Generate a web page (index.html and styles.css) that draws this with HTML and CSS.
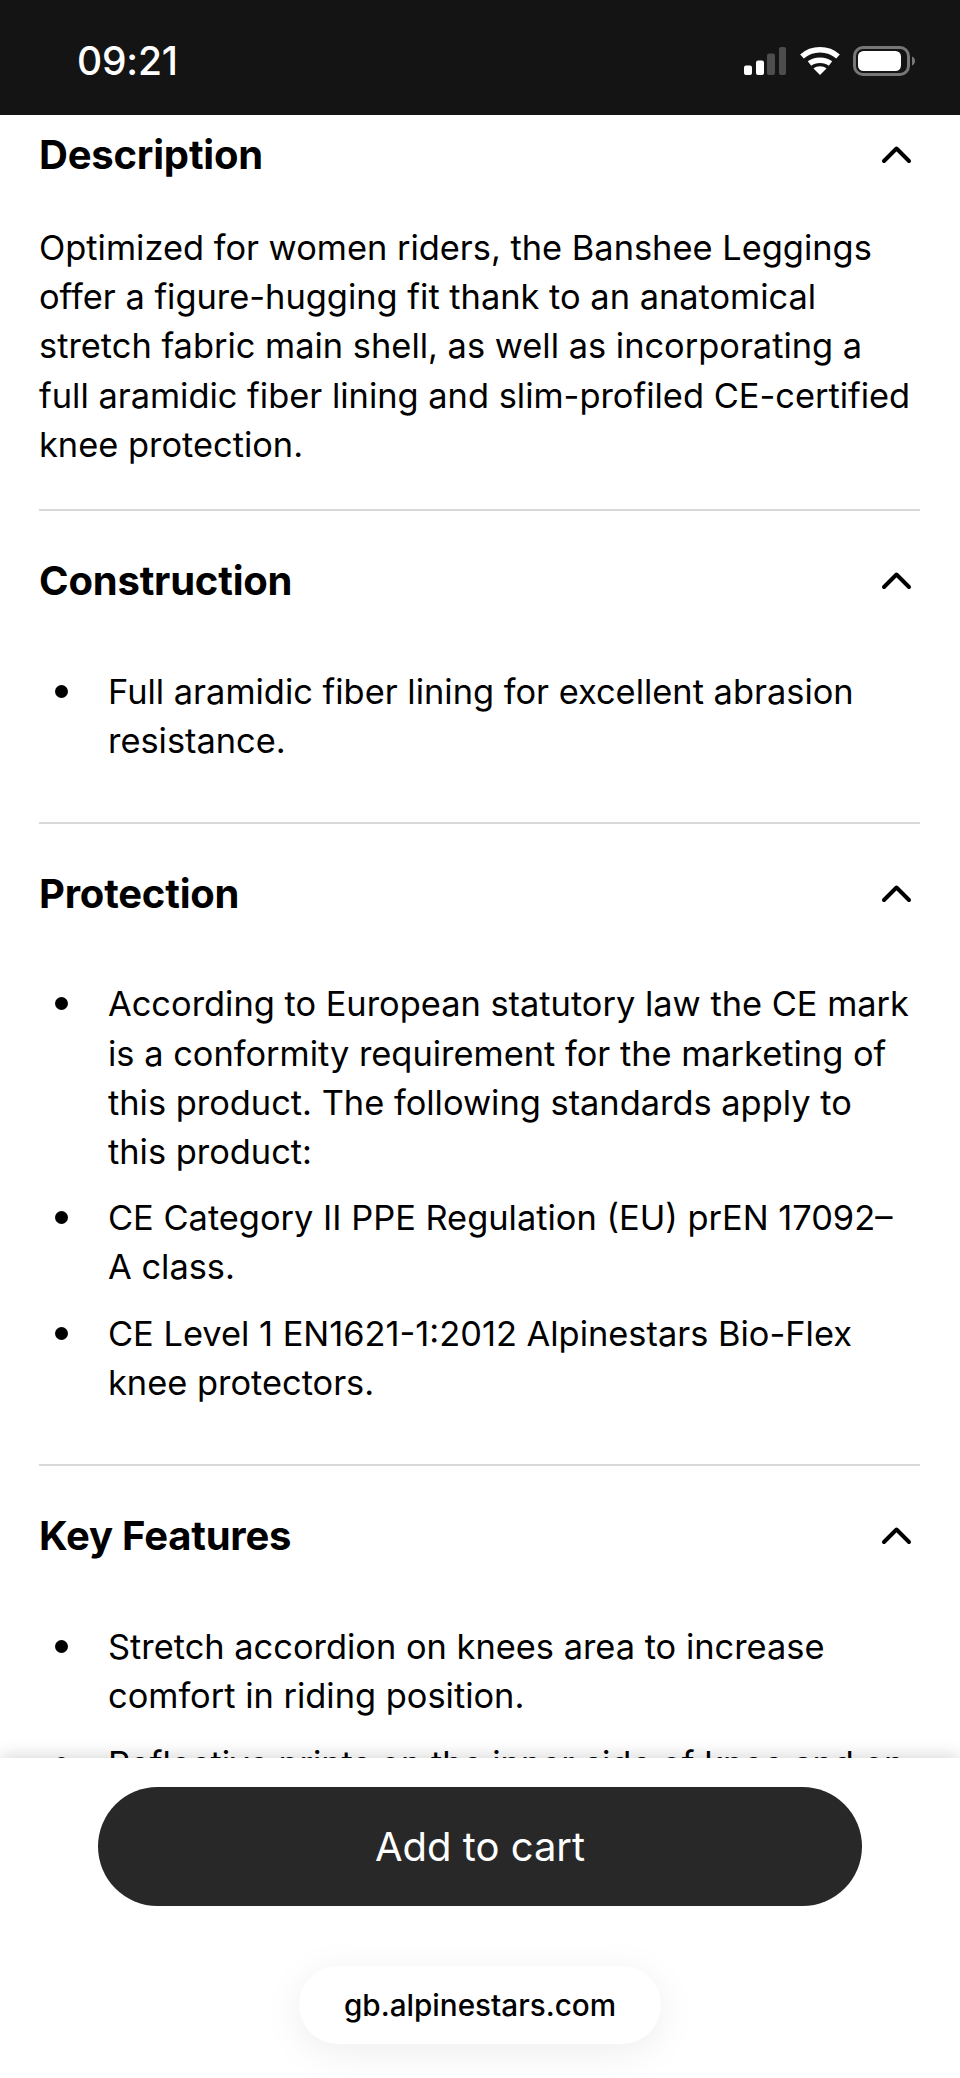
FILE: index.html
```html
<!DOCTYPE html>
<html lang="en">
<head>
<meta charset="utf-8">
<title>Banshee Leggings</title>
<link rel="stylesheet" href="styles.css">
</head>
<body>
<div class="screen">
  <header class="status">
    <span class="time">09:21</span>
    <div class="status-icons">
      <svg class="signal" width="42" height="30" viewBox="0 0 42 30"><rect x="0" y="19.500" width="8" height="9.500" rx="2" fill="#fff"/><rect x="12" y="14.500" width="8" height="14.500" rx="2" fill="#fff"/><rect x="23" y="7.500" width="8" height="21.500" rx="2" fill="#4d4d4d"/><rect x="35" y="1" width="7" height="28" rx="2" fill="#4d4d4d"/></svg>
      <svg class="wifi" width="40" height="30" viewBox="0 0 40 30"><path d="M2 10.5C12 1.5 28 1.5 38 10.5" fill="none" stroke="#fff" stroke-width="5.5"/><path d="M9.5 17.5C15 13 25 13 30.500 17.500" fill="none" stroke="#fff" stroke-width="5.500"/><path d="M13.500 22.500C17 19.500 23 19.500 26.500 22.500L20 29Z" fill="#fff"/></svg>
      <svg class="battery" width="62" height="30" viewBox="0 0 62 30"><rect x="1.500" y="1.500" width="54" height="27" rx="8.500" fill="none" stroke="#777" stroke-width="3"/><rect x="5" y="5" width="43" height="20" rx="5.500" fill="#fff"/><path d="M59 10.500c2 .5 3 2.500 3 4.500s-1 4-3 4.500z" fill="#777"/></svg>
    </div>
  </header>
  <main class="content">
    <section class="panel first">
      <div class="panel-head"><h2>Description</h2><svg class="chev" width="32" height="20" viewBox="0 0 32 20"><path d="M4 16L16.500 3.500L29 16" fill="none" stroke="#000" stroke-width="4" stroke-linecap="round" stroke-linejoin="round"/></svg></div>
      <p class="copy">Optimized for women riders, the Banshee Leggings<br>offer a figure-hugging fit thank to an anatomical<br>stretch fabric main shell, as well as incorporating a<br>full aramidic fiber lining and slim-profiled CE-certified<br>knee protection.</p>
    </section>
    <section class="panel">
      <div class="panel-head"><h2>Construction</h2><svg class="chev" width="32" height="20" viewBox="0 0 32 20"><path d="M4 16L16.500 3.500L29 16" fill="none" stroke="#000" stroke-width="4" stroke-linecap="round" stroke-linejoin="round"/></svg></div>
      <ul class="points">
        <li>Full aramidic fiber lining for excellent abrasion<br>resistance.</li>
      </ul>
    </section>
    <section class="panel">
      <div class="panel-head"><h2>Protection</h2><svg class="chev" width="32" height="20" viewBox="0 0 32 20"><path d="M4 16L16.500 3.500L29 16" fill="none" stroke="#000" stroke-width="4" stroke-linecap="round" stroke-linejoin="round"/></svg></div>
      <ul class="points">
        <li>According to European statutory law the CE mark<br>is a conformity requirement for the marketing of<br>this product. The following standards apply to<br>this product:</li>
        <li>CE Category II PPE Regulation (EU) prEN 17092–<br>A class.</li>
        <li>CE Level 1 EN1621-1:2012 Alpinestars Bio-Flex<br>knee protectors.</li>
      </ul>
    </section>
    <section class="panel last">
      <div class="panel-head"><h2>Key Features</h2><svg class="chev" width="32" height="20" viewBox="0 0 32 20"><path d="M4 16L16.500 3.500L29 16" fill="none" stroke="#000" stroke-width="4" stroke-linecap="round" stroke-linejoin="round"/></svg></div>
      <ul class="points">
        <li>Stretch accordion on knees area to increase<br>comfort in riding position.</li>
        <li>Reflective prints on the inner side of knee and on</li>
      </ul>
    </section>
  </main>
  <footer class="footer">
    <button class="cart">Add to cart</button>
    <div class="url">gb.alpinestars.com</div>
  </footer>
</div>
</body>
</html>
```
FILE: styles.css
```css
* { box-sizing: border-box; }
html, body { margin: 0; padding: 0; }
body { background: #fff; color: #000; font-family: Inter, "Liberation Sans", sans-serif; }
.screen { width: 960px; height: 2078px; display: flex; flex-direction: column; overflow: hidden; }
.status { flex: none; height: 115px; background: #141414; display: flex; align-items: center; justify-content: space-between; padding: 0 45px 0 77px; }
.time { color: #fff; font-size: 39px; font-weight: 500; letter-spacing: -0.2px; position: relative; top: 3px; }
.status-icons { display: flex; align-items: center; gap: 13px; position: relative; top: 3px; }
.status-icons svg { display: block; }
.status-icons .wifi { margin-left: 1px; }
.content { flex: 1; min-height: 0; overflow: hidden; padding: 0 40px 0 39px; }
.panel { border-bottom: 2px solid #d9d9d9; padding-bottom: 57px; }
.panel.first { padding-bottom: 40px; }
.panel.last { border-bottom: 0; }
.panel-head { display: flex; align-items: center; justify-content: space-between; height: 140px; padding-right: 8px; }
.first .panel-head { height: 80px; }
h2 { margin: 0; font-size: 40px; line-height: 50px; font-weight: 700; letter-spacing: -0.2px; }
.chev { display: block; }
.copy { margin: 28px 0 0; font-size: 34.4px; line-height: 49.2px; font-weight: 400; }
.points { margin: 15.5px 0 0; padding: 0 0 0 69px; font-size: 34.4px; line-height: 49.2px; list-style: none; }
.points li { margin-bottom: 17px; position: relative; }
.last .points li { margin-bottom: 19px; }
.points li::before { content: ""; position: absolute; left: -53px; top: 18px; width: 13px; height: 13px; border-radius: 50%; background: #000; }
.points li:last-child { margin-bottom: 0; }
.footer { flex: none; height: 320px; background: #fff; position: relative; display: flex; flex-direction: column; align-items: center; box-shadow: 0 -2px 16px rgba(0,0,0,.16); padding-top: 29px; }
.cart { width: 764px; height: 119px; border: 0; border-radius: 60px; background: #282828; color: #fff; font-family: inherit; font-size: 40px; font-weight: 400; }
.url { margin-top: 60px; width: 362px; height: 78px; border-radius: 39px; background: #fff; display: flex; align-items: center; justify-content: center; font-size: 29.7px; font-weight: 500; box-shadow: 0 8px 40px rgba(0,0,0,.07); }
```
